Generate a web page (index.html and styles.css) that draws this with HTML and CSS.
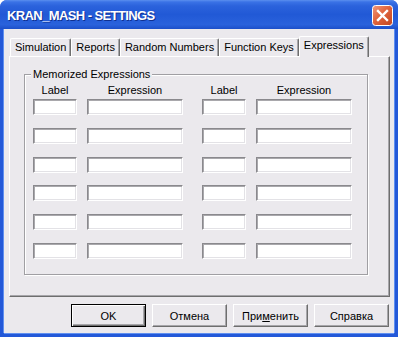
FILE: index.html
```html
<!DOCTYPE html>
<html lang="ru">
<head>
    <meta charset="UTF-8">
    <title>KRAN_MASH - SETTINGS</title>
    <link rel="stylesheet" href="styles.css">
</head>
<body>
    <div class="window">
        <div class="titlebar">
            <span class="title">KRAN_MASH - SETTINGS</span>
            <span class="close">
                <svg width="21" height="21" viewBox="0 0 21 21">
                    <defs>
                        <linearGradient id="cg" x1="0" y1="0" x2="1" y2="1">
                            <stop offset="0" stop-color="#f29a7c"/>
                            <stop offset="0.45" stop-color="#e0643e"/>
                            <stop offset="1" stop-color="#c2451f"/>
                        </linearGradient>
                    </defs>
                    <rect x="0.5" y="0.5" width="20" height="20" rx="3" fill="url(#cg)" stroke="#fff"/>
                    <path d="M6 6 L15 15 M15 6 L6 15" stroke="#fff" stroke-width="2.4" stroke-linecap="square"/>
                </svg>
            </span>
        </div>
        <div class="client">
            <div class="tabs">
                <div class="tab">Simulation</div>
                <div class="tab">Reports</div>
                <div class="tab">Random Numbers</div>
                <div class="tab">Function Keys</div>
                <div class="tab active">Expressions</div>
            </div>
            <div class="panel">
                <div class="group">
                    <span class="legend">Memorized Expressions</span>
                    <div class="columns">
                        <div class="col-set">
                            <div class="head-row">
                                <span>Label</span>
                                <span>Expression</span>
                            </div>
                            <div class="rows">
                                <input type="text"><input type="text">
                                <input type="text"><input type="text">
                                <input type="text"><input type="text">
                                <input type="text"><input type="text">
                                <input type="text"><input type="text">
                                <input type="text"><input type="text">
                            </div>
                        </div>
                        <div class="col-set">
                            <div class="head-row">
                                <span>Label</span>
                                <span>Expression</span>
                            </div>
                            <div class="rows">
                                <input type="text"><input type="text">
                                <input type="text"><input type="text">
                                <input type="text"><input type="text">
                                <input type="text"><input type="text">
                                <input type="text"><input type="text">
                                <input type="text"><input type="text">
                            </div>
                        </div>
                    </div>
                </div>
            </div>
            <div class="buttons">
                <button class="btn default">OK</button>
                <button class="btn">Отмена</button>
                <button class="btn">При<u>м</u>енить</button>
                <button class="btn">Справка</button>
            </div>
        </div>
    </div>
</body>
</html>
```

FILE: styles.css
```css
body {
    margin: 0;
    background: #ffffff;
    font-family: "Liberation Sans", Arial, sans-serif;
    font-size: 11px;
    color: #000;
}
.window {
    width: 398px;
    height: 337px;
    display: flex;
    flex-direction: column;
    background: #2358d8;
    border-radius: 7px 7px 0 0;
    overflow: hidden;
}
.titlebar {
    height: 29px;
    flex: none;
    display: flex;
    align-items: center;
    justify-content: space-between;
    padding: 0 5px 0 7px;
    background: linear-gradient(#5b8fee 0, #3a72e6 2px, #2b62dc 6px, #2159d6 50%, #2a62dc 85%, #1c4fc9 100%);
}
.title {
    color: #fff;
    font-weight: bold;
    font-size: 13px;
    letter-spacing: -0.6px;
    text-shadow: 1px 1px 0 #10308f;
    margin-top: 1px;
}
.close {
    display: flex;
    margin-top: 2px;
}
.client {
    flex: 1;
    margin: 0 4px 4px;
    background: #ebe9ed;
    padding: 7px 4px 0 5px;
    display: flex;
    flex-direction: column;
    box-shadow: -1px 0 0 #5f8ff0, 1px 0 0 #5f8ff0, 0 1px 0 #5f8ff0;
}
.tabs {
    display: flex;
    align-items: flex-end;
    height: 20px;
    padding-left: 1px;
}
.tab {
    height: 18px;
    box-sizing: border-box;
    padding: 2px 4px 0;
    line-height: 13px;
    border-left: 1px solid #fff;
    border-top: 1px solid #fff;
    border-right: 1px solid #6e6e6e;
    box-shadow: inset -1px 0 0 #a7a6aa;
    border-radius: 2px 2px 0 0;
    white-space: nowrap;
}
.tab.active {
    height: 21px;
    padding-top: 2px;
    margin-bottom: -1px;
    position: relative;
    z-index: 1;
    background: #ebe9ed;
}
.panel {
    height: 241px;
    box-sizing: border-box;
    border: 1px solid;
    border-color: #fff #6e6e6e #6e6e6e #fff;
    box-shadow: inset -1px -1px 0 #a7a6aa;
    padding: 17px 21px 0 14px;
}
.group {
    height: 201px;
    box-sizing: border-box;
    border: 1px solid #a09fa3;
    box-shadow: 1px 1px 0 #fff, inset 1px 1px 0 #fff;
    padding: 0 8px;
}
.legend {
    display: block;
    width: max-content;
    line-height: 13px;
    margin: -7px 0 0 -2px;
    padding: 0 2px;
    background: #ebe9ed;
}
.columns {
    display: flex;
    gap: 19px;
    margin-top: 3px;
}
.head-row {
    display: grid;
    grid-template-columns: 44px 96px;
    column-gap: 10px;
    line-height: 13px;
    margin-bottom: 2px;
    text-align: center;
}
.rows {
    display: grid;
    grid-template-columns: 44px 96px;
    column-gap: 10px;
    row-gap: 12.8px;
}
.rows input {
    height: 16px;
    box-sizing: border-box;
    margin: 0;
    padding: 0 2px;
    background: #fff;
    border: 1px solid;
    border-color: #8a898d #fff #fff #8a898d;
    box-shadow: inset 1px 1px 0 #a9a8ac, inset -1px -1px 0 #e3e2e6;
    font: inherit;
    outline: none;
}
.buttons {
    display: flex;
    justify-content: flex-end;
    gap: 6px;
    margin-top: 7px;
    padding-right: 1px;
}
.btn {
    width: 75px;
    height: 23px;
    box-sizing: border-box;
    padding: 0;
    background: #ebe9ed;
    border: 1px solid;
    border-color: #fff #6e6e6e #6e6e6e #fff;
    box-shadow: inset -1px -1px 0 #a7a6aa;
    font: inherit;
    color: #000;
}
.btn.default {
    border-color: #000;
    box-shadow: inset 1px 1px 0 #fff, inset -1px -1px 0 #6e6e6e, inset -2px -2px 0 #a7a6aa;
}
```
